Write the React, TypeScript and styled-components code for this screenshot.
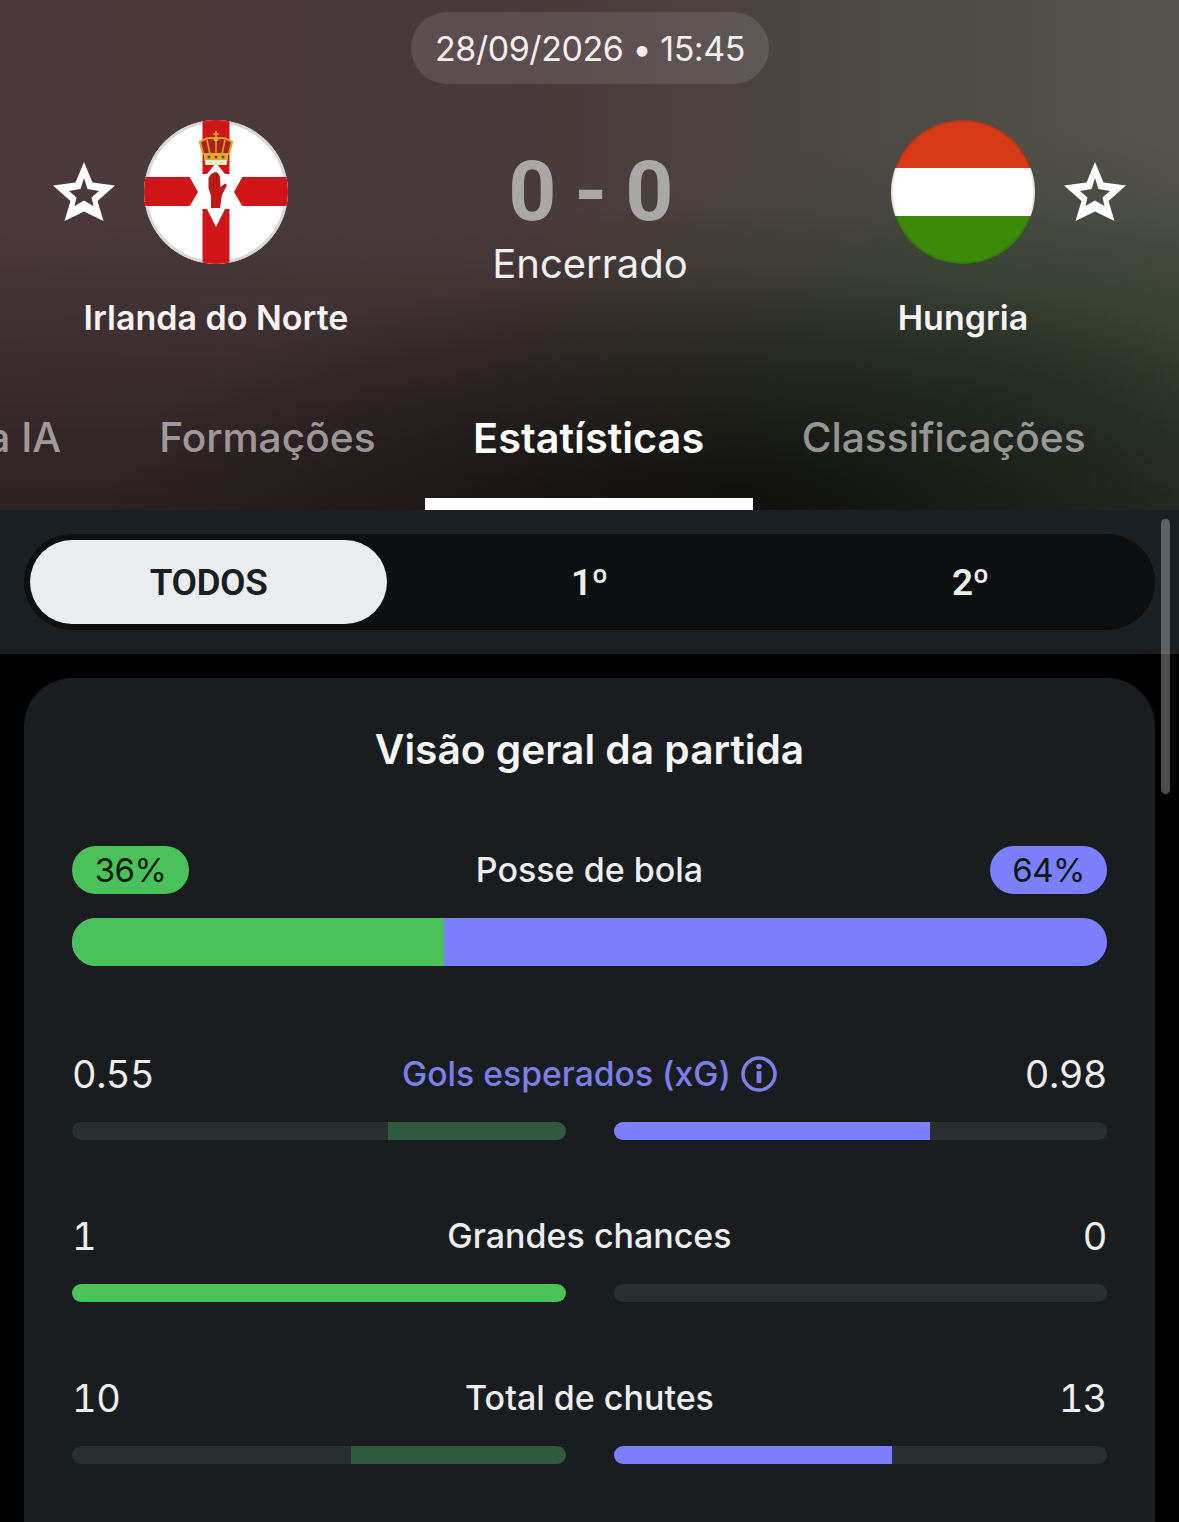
import React from "react";
import styled, { createGlobalStyle } from "styled-components";

const Global = createGlobalStyle`
  html, body { margin: 0; padding: 0; background: #000; }
  body { font-family: Inter, "Liberation Sans", sans-serif; }
  #root { width: 1179px; height: 1522px; overflow: hidden; }
`;

const Page = styled.div`
  position: relative;
  width: 1179px;
  height: 1522px;
  overflow: hidden;
  background: #000;
  color: #fff;
`;

const Header = styled.header`
  height: 510px;
  box-sizing: border-box;
  padding-top: 12px;
  display: flex;
  flex-direction: column;
  background:
    radial-gradient(ellipse 640px 250px at 740px 510px, rgba(5, 6, 3, 0.72), rgba(5, 6, 3, 0) 100%),
    radial-gradient(ellipse 560px 240px at 1030px 370px, rgba(30, 56, 30, 0.5), rgba(30, 56, 30, 0) 100%),
    linear-gradient(180deg, rgba(0, 0, 0, 0) 0%, rgba(0, 0, 0, 0) 40%, rgba(0, 0, 0, 0.42) 100%),
    linear-gradient(90deg, #4c393b 0%, #4a3a3b 45%, #4e4c47 80%, #55534c 100%);
`;

const DateRow = styled.div`
  display: flex;
  justify-content: center;
  flex-shrink: 0;
`;

const DatePill = styled.div`
  width: 358px;
  height: 72px;
  border-radius: 36px;
  background: rgba(255, 255, 255, 0.1);
  display: flex;
  align-items: center;
  justify-content: center;
  font-size: 34px;
  letter-spacing: -0.45px;
  color: #f1efee;
  margin-left: 1px;
`;

const Teams = styled.div`
  margin-top: 36px;
  flex: 1;
  min-height: 0;
  display: grid;
  grid-template-columns: 400px 1fr 400px;
`;

const Side = styled.div<{ $right?: boolean }>`
  display: flex;
  flex-direction: column;
  align-items: ${(p) => (p.$right ? "flex-end" : "flex-start")};
  padding: ${(p) => (p.$right ? "0 54px 0 0" : "0 0 0 54px")};
`;

const TeamTop = styled.div<{ $reverse?: boolean }>`
  display: flex;
  align-items: center;
  gap: 30px;
  flex-direction: ${(p) => (p.$reverse ? "row-reverse" : "row")};
`;

const NameWrap = styled.div<{ $right?: boolean }>`
  width: 264px;
  display: flex;
  justify-content: center;
  margin-left: ${(p) => (p.$right ? "0" : "30px")};
  margin-right: ${(p) => (p.$right ? "30px" : "0")};
  white-space: nowrap;
`;

const TeamName = styled.div`
  margin-top: 34px;
  font-size: 34px;
  line-height: 40px;
  font-weight: 600;
  color: #f5f4f3;
`;

const Center = styled.div`
  display: flex;
  flex-direction: column;
  align-items: center;
  margin-left: 1px;
`;

const Score = styled.div`
  margin-top: 26px;
  font-family: Roboto, Inter, sans-serif;
  font-size: 84px;
  letter-spacing: -1.5px;
  line-height: 92px;
  font-weight: 700;
  color: #aaa8a6;
  white-space: nowrap;
`;

const Status = styled.div`
  font-size: 40px;
  line-height: 48px;
  color: #f0efef;
  margin-top: 2px;
`;

const Tabs = styled.nav`
  height: 104px;
  flex-shrink: 0;
  overflow: hidden;
  display: flex;
  align-items: stretch;
`;

const TabTrack = styled.div`
  display: flex;
  margin-left: -240.5px;
`;

const Tab = styled.div<{ $active?: boolean }>`
  padding: 8px ${(p) => (p.$active ? "48.5px" : "49px")} 0;
  height: 104px;
  box-sizing: border-box;
  font-size: ${(p) => (p.$active ? "41.4px" : "40.7px")};
  line-height: 48px;
  font-weight: ${(p) => (p.$active ? 600 : 500)};
  white-space: nowrap;
  color: ${(p) => (p.$active ? "#fff" : "rgba(255,255,255,0.55)")};
  border-bottom: 12px solid ${(p) => (p.$active ? "#fff" : "transparent")};
`;

const FilterBar = styled.div`
  height: 144px;
  box-sizing: border-box;
  padding: 24px;
  background: #191f23;
`;

const Segmented = styled.div`
  height: 96px;
  box-sizing: border-box;
  padding: 6px;
  border-radius: 48px;
  background: #0d0f11;
  display: grid;
  grid-template-columns: repeat(3, 1fr);
  gap: 24px;
`;

const Segment = styled.div<{ $active?: boolean }>`
  display: flex;
  align-items: center;
  justify-content: center;
  border-radius: 42px;
  font-family: Roboto, "Liberation Sans", sans-serif;
  font-size: 37px;
  letter-spacing: -0.5px;
  font-weight: 600;
  padding-top: 1px;
  color: ${(p) => (p.$active ? "#191e22" : "#eceef0")};
  background: ${(p) => (p.$active ? "#ebecef" : "transparent")};
`;

const Card = styled.section`
  margin: 24px 24px 0;
  border-radius: 48px;
  padding: 48px;
  background: #191d20;
  height: 900px;
  box-sizing: border-box;
`;

const CardTitle = styled.h2`
  margin: 0;
  text-align: center;
  font-size: 40.7px;
  line-height: 48px;
  font-weight: 600;
  color: #f4f5f6;
`;

const Row = styled.div`
  height: 48px;
  display: grid;
  grid-template-columns: 1fr auto 1fr;
  align-items: center;
`;

const PossHead = styled(Row)`
  margin-top: 72px;
`;

const Pill = styled.div<{ $color: string; $right?: boolean }>`
  width: 117px;
  height: 48px;
  border-radius: 24px;
  background: ${(p) => p.$color};
  color: #0d1a10;
  display: flex;
  align-items: center;
  justify-content: center;
  font-size: 33px;
  letter-spacing: -0.6px;
  justify-self: ${(p) => (p.$right ? "end" : "start")};
`;

const Label = styled.div<{ $accent?: boolean }>`
  display: flex;
  align-items: center;
  gap: 10px;
  font-size: ${(p) => (p.$accent ? "33.7px" : "34px")};
  font-weight: 450;
  line-height: 48px;
  white-space: nowrap;
  color: ${(p) => (p.$accent ? "#7b80e8" : "#eceef0")};
`;

const PossBar = styled.div`
  margin-top: 24px;
  height: 48px;
  border-radius: 24px;
  overflow: hidden;
  display: flex;
  background: #7c80ff;
`;

const PossFill = styled.div`
  background: #4bc159;
`;

const StatBlock = styled.div`
  margin-top: 84px;
  & + & {
    margin-top: 72px;
  }
`;

const Value = styled.div<{ $right?: boolean }>`
  font-size: 38px;
  letter-spacing: -0.5px;
  line-height: 48px;
  font-variant-numeric: tabular-nums;
  color: #eceef0;
  justify-self: ${(p) => (p.$right ? "end" : "start")};
`;

const StatBars = styled.div`
  margin-top: 24px;
  display: grid;
  grid-template-columns: 1fr 1fr;
  gap: 48px;
`;

const Track = styled.div<{ $right?: boolean }>`
  height: 18px;
  border-radius: 9px;
  overflow: hidden;
  background: #2a2f32;
  display: flex;
  justify-content: ${(p) => (p.$right ? "flex-start" : "flex-end")};
`;

const Fill = styled.div<{ $color: string }>`
  height: 100%;
  background: ${(p) => p.$color};
`;

const Scrollbar = styled.div`
  position: absolute;
  left: 1161px;
  top: 519px;
  width: 9px;
  height: 275px;
  border-radius: 5px;
  background: rgba(255, 255, 255, 0.3);
`;

const StarIcon = styled.svg`
  display: block;
  width: 60px;
  height: 58px;
  overflow: visible;
`;

const Star = () => (
  <StarIcon viewBox="0 0 60 58" aria-hidden="true">
    <path
      fillRule="evenodd"
      fill="#fff"
      d="M30 -1 L38.5 19.5 L61 22.5 L43.5 38 L49.5 58 L30 48.5 L10.5 58 L16.5 38 L-1 22.5 L21.5 19.5 Z M30 15 L26.5 26 L15 28 L22.5 34.5 L20.5 43 L30 37.5 L39.5 43 L37.5 34.5 L45 28 L33.5 26 Z"
    />
  </StarIcon>
);

const NorthernIreland = () => (
  <svg width="144" height="144" viewBox="0 0 144 144" aria-hidden="true">
    <defs>
      <clipPath id="ni">
        <circle cx="72" cy="72" r="72" />
      </clipPath>
    </defs>
    <g clipPath="url(#ni)">
      <rect width="144" height="144" fill="#fff" />
      <circle cx="72" cy="72" r="70.5" fill="none" stroke="#d6d6d6" strokeWidth="3" />
      <rect x="58.5" width="27" height="144" fill="#cf1518" />
      <rect y="57" width="144" height="29" fill="#cf1518" />
      <polygon points="72,43 81,54 100,54 90,72 100,89 81,89 72,107 63,89 44,89 54,72 44,54 63,54" fill="#fff" />
      <path
        d="M67 88 L67 76 L64.5 68 L64.5 58 L67 54 L71 52 L74 53 L76 57 L76.5 67 L81 63.5 L83 65 L78 75 L76 88 Z"
        fill="#c0181a"
      />
      <path d="M69.5 54 L69.5 68 M72.5 54 L72.5 68" stroke="#8f1714" strokeWidth="0.7" />
      <path d="M56 22 Q64 16 72 19 Q80 16 88 22 L85 34 L59 34 Z" fill="#a8241c" stroke="#dc9f2e" strokeWidth="2.2" />
      <path d="M72 19 L72 34 M63 20 L66 34 M81 20 L78 34" stroke="#dc9f2e" strokeWidth="1.6" />
      <rect x="60" y="33" width="24" height="8" rx="1" fill="#e2a92f" />
      <rect x="61" y="40" width="22" height="5" rx="1.5" fill="#efe9c4" />
      <path d="M72 11 L72 18 M69.5 14 L74.5 14" stroke="#dc9f2e" strokeWidth="2" />
      <circle cx="72" cy="19" r="2.4" fill="#e2a92f" />
      <circle cx="65" cy="37" r="1.5" fill="#33702f" />
      <circle cx="72" cy="37" r="1.5" fill="#a8241c" />
      <circle cx="79" cy="37" r="1.5" fill="#33702f" />
    </g>
  </svg>
);

const Hungary = () => (
  <svg width="144" height="144" viewBox="0 0 144 144" aria-hidden="true">
    <defs>
      <clipPath id="hu">
        <circle cx="72" cy="72" r="72" />
      </clipPath>
    </defs>
    <g clipPath="url(#hu)">
      <rect width="144" height="48" fill="#d63a17" />
      <rect y="48" width="144" height="48" fill="#fff" />
      <rect y="96" width="144" height="48" fill="#3c8a0c" />
    </g>
    <circle cx="72" cy="72" r="71" fill="none" stroke="rgba(0,0,0,0.1)" strokeWidth="2" />
  </svg>
);

const InfoIcon = () => (
  <svg width="36" height="36" viewBox="0 0 36 36" aria-hidden="true">
    <circle cx="18" cy="18" r="16" fill="none" stroke="#7b80e8" strokeWidth="3.5" />
    <rect x="15.6" y="15" width="4.8" height="12" rx="1" fill="#7b80e8" />
    <circle cx="18" cy="10.5" r="2.7" fill="#7b80e8" />
  </svg>
);

type StatRow = {
  label: string;
  left: string;
  right: string;
  leftPct: number;
  rightPct: number;
  leftColor: string;
  accent?: boolean;
};

const GREEN = "#4bc159";
const DIM = "#305a3d";
const BLUE = "#7c80ff";

const stats: StatRow[] = [
  { label: "Gols esperados (xG)", left: "0.55", right: "0.98", leftPct: 36, rightPct: 64.2, leftColor: DIM, accent: true },
  { label: "Grandes chances", left: "1", right: "0", leftPct: 100, rightPct: 0, leftColor: GREEN },
  { label: "Total de chutes", left: "10", right: "13", leftPct: 43.5, rightPct: 56.5, leftColor: DIM },
];

export default function App() {
  return (
    <Page>
      <Global />
      <Header>
        <DateRow>
          <DatePill>28/09/2026 • 15:45</DatePill>
        </DateRow>
        <Teams>
          <Side>
            <TeamTop>
              <Star />
              <NorthernIreland />
            </TeamTop>
            <NameWrap>
              <TeamName>Irlanda do Norte</TeamName>
            </NameWrap>
          </Side>
          <Center>
            <Score>0 - 0</Score>
            <Status>Encerrado</Status>
          </Center>
          <Side $right>
            <TeamTop $reverse>
              <Star />
              <Hungary />
            </TeamTop>
            <NameWrap $right>
              <TeamName>Hungria</TeamName>
            </NameWrap>
          </Side>
        </Teams>
        <Tabs>
          <TabTrack>
            <Tab>Análise da IA</Tab>
            <Tab>Formações</Tab>
            <Tab $active>Estatísticas</Tab>
            <Tab>Classificações</Tab>
          </TabTrack>
        </Tabs>
      </Header>
      <FilterBar>
        <Segmented>
          <Segment $active>TODOS</Segment>
          <Segment>1º</Segment>
          <Segment>2º</Segment>
        </Segmented>
      </FilterBar>
      <Card>
        <CardTitle>Visão geral da partida</CardTitle>
        <PossHead>
          <Pill $color={GREEN}>36%</Pill>
          <Label>Posse de bola</Label>
          <Pill $color={BLUE} $right>64%</Pill>
        </PossHead>
        <PossBar>
          <PossFill style={{ width: "35.95%" }} />
        </PossBar>
        {stats.map((s) => (
          <StatBlock key={s.label}>
            <Row>
              <Value>{s.left}</Value>
              <Label $accent={s.accent}>
                {s.label}
                {s.accent && <InfoIcon />}
              </Label>
              <Value $right>{s.right}</Value>
            </Row>
            <StatBars>
              <Track>
                <Fill $color={s.leftColor} style={{ width: `${s.leftPct}%` }} />
              </Track>
              <Track $right>
                <Fill $color={BLUE} style={{ width: `${s.rightPct}%` }} />
              </Track>
            </StatBars>
          </StatBlock>
        ))}
      </Card>
      <Scrollbar />
    </Page>
  );
}
